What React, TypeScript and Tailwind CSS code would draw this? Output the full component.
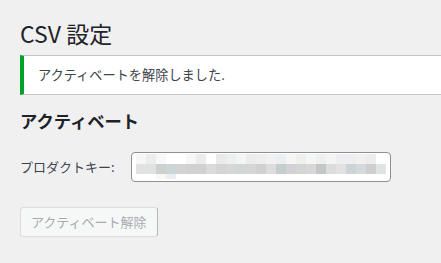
const font = "font-['Noto_Sans_CJK_JP','Noto_Sans',sans-serif]";

// blurred key preview, 3 rows of 10px blocks
const row1 = [
  "bg-[#f5f7f7]", "bg-[#ececec]", "bg-[#f7f8f8]", "bg-[#ffffff]", "bg-[#ffffff]",
  "bg-[#f7f7f7]", "bg-[#ececec]", "bg-[#ffffff]", "bg-[#eaeae7]", "bg-[#eef0f0]",
  "bg-[#f4f5f5]", "bg-[#ececec]", "bg-[#eeeeee]", "bg-[#f0f1f1]", "bg-[#eceeef]",
  "bg-[#f6f6f6]", "bg-[#efefeb]", "bg-[#f5f6f6]", "bg-[#eef0f0]", "bg-[#f4f4f4]",
  "bg-[#eceeef]", "bg-[#eeeeef]", "bg-[#f0f0f0]", "bg-[#ececec]", "bg-[#ffffff]",
];
const row2 = [
  "bg-[#e3e0e0]", "bg-[#dfe2e2]", "bg-[#cdd0cc]", "bg-[#cbd5d5]", "bg-[#d3d3d6]",
  "bg-[#d1d0d3]", "bg-[#d1d1d1]", "bg-[#dbdbdb]", "bg-[#d4d4d4]", "bg-[#d7d7d7]",
  "bg-[#d2d7d6]", "bg-[#d6d6d6]", "bg-[#d0d0d0]", "bg-[#dcdcdc]", "bg-[#c5cdce]",
  "bg-[#d3d0d6]", "bg-[#d1d5d3]", "bg-[#d8d6da]", "bg-[#c4c7c6]", "bg-[#dcdcdc]",
  "bg-[#e1e1e1]", "bg-[#cbd3d4]", "bg-[#d3dadc]", "bg-[#cfcfcf]", "bg-[#dfe3e3]",
];
const row3 = [
  "bg-white", "bg-white", "bg-[#faf8f2]", "bg-[#e8eef1]",
];

function BlurRow({ cells, h }: { cells: string[]; h: string }) {
  return (
    <div className="flex">
      {cells.map((c, i) => (
        <span key={i} className={`w-[10px] ${h} ${c}`} />
      ))}
    </div>
  );
}

export default function App() {
  return (
    <div className={`min-h-[263px] w-full overflow-hidden bg-[#f0f0f1] pl-5 pt-[18px] text-[#1d2327] ${font}`}>
      <h1 className="text-[23px] font-normal leading-[30px]">CSV 設定</h1>

      {/* notice */}
      <div className="mt-[7px] flex h-10 items-center border-y border-l-4 border-[#c3c4c7] border-l-[#00a32a] bg-white pl-[14px]">
        <p className="text-[13.2px] leading-5 text-[#3c434a]">アクティベートを解除しました.</p>
      </div>

      <h2 className="mt-[15px] text-[17.3px] font-bold leading-[22px]">アクティベート</h2>

      <div className="mt-5 flex items-center">
        <label className="w-[111px] text-[13px] leading-5 text-[#3c434a]">プロダクトキー:</label>
        <div className="h-[30px] w-[260px] rounded-[4px] border border-[#8c8f94] bg-white pl-1 pt-px">
          <BlurRow cells={row1} h="h-[10px]" />
          <BlurRow cells={row2} h="h-[10px]" />
          <BlurRow cells={row3} h="h-[5px]" />
        </div>
      </div>

      <button
        type="button"
        disabled
        className="mt-[25px] flex h-[30px] items-center rounded-[3px] border border-[#dcdcde] border-r-[#b4b6b8] bg-[#f6f7f7] px-[10px] text-[13px] text-[#a7aaad]"
      >
        アクティベート解除
      </button>
    </div>
  );
}
